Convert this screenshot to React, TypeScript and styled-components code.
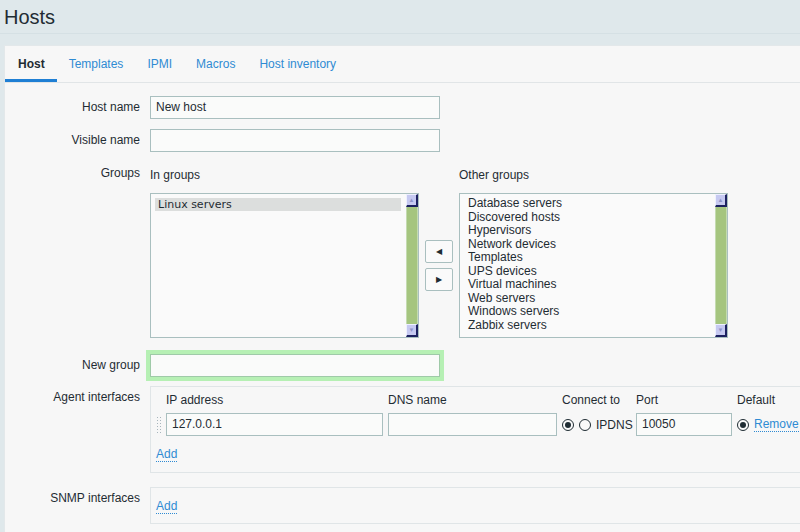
import React from "react";
import styled, { createGlobalStyle } from "styled-components";

const GlobalStyle = createGlobalStyle`
  html, body {
    margin: 0;
    padding: 0;
    background: #dfe8eb;
    overflow: hidden;
  }
  body {
    font-family: "Liberation Sans", Arial, sans-serif;
    font-size: 12px;
    color: #1f2c33;
  }
`;

const Page = styled.div`
  width: 800px;
  height: 532px;
  display: flex;
  flex-direction: column;
  overflow: hidden;
`;

const Header = styled.header`
  flex: none;
  height: 34px;
  border-bottom: 1px solid #d5e0e4;
  margin-bottom: 11px;
  padding: 5px 0 0 4px;
  box-sizing: border-box;
`;

const Title = styled.h1`
  margin: 0;
  font-size: 20px;
  font-weight: normal;
  line-height: 24px;
  color: #1f2c33;
`;

const Panel = styled.main`
  flex: 1;
  min-height: 0;
  margin-left: 4px;
  background: #f7f7f7;
  border-left: 1px solid #e3e8ea;
  border-top: 1px solid #e3e8ea;
`;

const TabBar = styled.nav`
  display: flex;
  height: 36px;
  border-bottom: 1px solid #e1e5e7;
`;

const Tab = styled.a<{ $active?: boolean }>`
  padding: 0 12px;
  line-height: 36px;
  font-size: 12px;
  color: ${(p) => (p.$active ? "#1f2c33" : "#2f8bd3")};
  font-weight: ${(p) => (p.$active ? "bold" : "normal")};
  box-shadow: ${(p) => (p.$active ? "inset 0 -3px 0 #1f7fd4" : "none")};
  cursor: pointer;

  &:first-child {
    padding-left: 13px;
  }
`;

const Form = styled.div`
  padding-top: 13px;
`;

const Row = styled.div<{ $gap?: number }>`
  display: grid;
  grid-template-columns: 135px 1fr;
  column-gap: 10px;
  margin-bottom: ${(p) => p.$gap ?? 10}px;
`;

const Label = styled.label<{ $top?: boolean }>`
  text-align: right;
  line-height: 23px;
  white-space: nowrap;
  align-self: ${(p) => (p.$top ? "start" : "stretch")};
`;

const TextInput = styled.div<{ $w: number; $glow?: boolean }>`
  width: ${(p) => p.$w}px;
  height: 23px;
  box-sizing: border-box;
  border: 1px solid ${(p) => (p.$glow ? "#9fcaa8" : "#a9bfbf")};
  background: #fafbfa;
  padding: 0 5px;
  line-height: 21px;
  font-size: 12px;
  box-shadow: ${(p) => (p.$glow ? "0 0 0 4px #b6f0b4" : "none")};
`;

const Groups = styled.div`
  display: flex;
  align-items: flex-end;
`;

const GroupCol = styled.div`
  display: flex;
  flex-direction: column;
`;

const GroupTitle = styled.div`
  height: 31px;
  line-height: 26px;
`;

const ListBox = styled.div`
  width: 269px;
  height: 145px;
  box-sizing: border-box;
  border: 1px solid #a9bfbf;
  background: #fafafa;
  display: flex;
`;

const ListItems = styled.div<{ $dejavu?: boolean }>`
  flex: 1;
  padding: ${(p) => (p.$dejavu ? "4px 5px 0 4px" : "3px 6px 0 5px")};
  font-family: ${(p) =>
    p.$dejavu ? '"DejaVu Sans", sans-serif' : '"Liberation Sans", Arial, sans-serif'};
  font-size: ${(p) => (p.$dejavu ? "11px" : "12px")};
`;

const ListItem = styled.div<{ $selected?: boolean; $h: number }>`
  line-height: ${(p) => p.$h}px;
  height: ${(p) => p.$h}px;
  padding-left: 3px;
  background: ${(p) => (p.$selected ? "#dcdedd" : "transparent")};
  white-space: nowrap;
`;

const ScrollBar = styled.div`
  width: 12px;
  display: flex;
  flex-direction: column;
`;

const ScrollArrow = styled.div`
  height: 13px;
  box-sizing: border-box;
  background: #c6c9f1;
  border-top: 1px solid #eef0ff;
  border-left: 1px solid #eef0ff;
  border-right: 2px solid #1d2160;
  border-bottom: 2px solid #1d2160;
  display: flex;
  align-items: center;
  justify-content: center;
  font-size: 6px;
  color: #8f93c9;
  line-height: 1;
`;

const ScrollTrack = styled.div`
  flex: 1;
  background: #a5c57f;
  border-left: 1px solid #c4dbb0;
  border-right: 1px solid #c4dbb0;
`;

const MoveButtons = styled.div`
  height: 145px;
  margin: 0 6px;
  display: flex;
  flex-direction: column;
  justify-content: center;
  gap: 5px;
`;

const MoveButton = styled.button`
  width: 28px;
  height: 23px;
  padding: 0;
  border: 1px solid #a9bfbf;
  border-radius: 2px;
  background: #fafafa;
  font-size: 8px;
  color: #1f2c33;
  display: flex;
  align-items: center;
  justify-content: center;
`;

const InterfaceBox = styled.div<{ $pt?: number; $pb?: number }>`
  border: 1px solid #e0e5e7;
  border-right: none;
  padding: ${(p) => p.$pt ?? 0}px 0 ${(p) => p.$pb ?? 10}px 5px;
`;

const IfaceGrid = styled.div`
  display: grid;
  grid-template-columns: 5px 217px 169px 69px 96px auto;
  column-gap: 5px;
  align-items: center;
`;

const ColHead = styled.div`
  line-height: 26px;
  white-space: nowrap;
`;

const DragHandle = styled.div`
  width: 5px;
  height: 17px;
  background-image: radial-gradient(circle, #a7b5bc 0.8px, transparent 1px);
  background-size: 3px 3px;
`;

const ConnectCell = styled.div`
  display: flex;
  align-items: center;
  gap: 5px;
`;

const Radio = styled.span<{ $checked?: boolean }>`
  width: 12px;
  height: 12px;
  box-sizing: border-box;
  border: 1px solid #1f2c33;
  border-radius: 50%;
  display: inline-flex;
  align-items: center;
  justify-content: center;
  flex: none;
  background: #fafafa;

  &::after {
    content: "";
    width: 6px;
    height: 6px;
    border-radius: 50%;
    background: ${(p) => (p.$checked ? "#1f2c33" : "transparent")};
  }
`;

const Link = styled.a`
  color: #2f8bd3;
  border-bottom: 1px dotted #2f8bd3;
  cursor: pointer;
  white-space: nowrap;
`;

const AddLine = styled.div<{ $mt?: number }>`
  margin-top: ${(p) => p.$mt ?? 0}px;
  line-height: 16px;
`;

const inGroups = ["Linux servers"];
const otherGroups = [
  "Database servers",
  "Discovered hosts",
  "Hypervisors",
  "Network devices",
  "Templates",
  "UPS devices",
  "Virtual machines",
  "Web servers",
  "Windows servers",
  "Zabbix servers",
];

const Scroll = () => (
  <ScrollBar>
    <ScrollArrow>▲</ScrollArrow>
    <ScrollTrack />
    <ScrollArrow>▼</ScrollArrow>
  </ScrollBar>
);

export default function App() {
  return (
    <Page>
      <GlobalStyle />
      <Header>
        <Title>Hosts</Title>
      </Header>
      <Panel>
        <TabBar>
          <Tab $active>Host</Tab>
          <Tab>Templates</Tab>
          <Tab>IPMI</Tab>
          <Tab>Macros</Tab>
          <Tab>Host inventory</Tab>
        </TabBar>
        <Form>
          <Row>
            <Label>Host name</Label>
            <TextInput $w={290}>New host</TextInput>
          </Row>
          <Row>
            <Label>Visible name</Label>
            <TextInput $w={290} />
          </Row>
          <Row $gap={16}>
            <Label $top>Groups</Label>
            <Groups>
              <GroupCol>
                <GroupTitle>In groups</GroupTitle>
                <ListBox>
                  <ListItems $dejavu>
                    {inGroups.map((g) => (
                      <ListItem key={g} $selected $h={13}>
                        {g}
                      </ListItem>
                    ))}
                  </ListItems>
                  <Scroll />
                </ListBox>
              </GroupCol>
              <MoveButtons>
                <MoveButton>◀</MoveButton>
                <MoveButton>▶</MoveButton>
              </MoveButtons>
              <GroupCol>
                <GroupTitle>Other groups</GroupTitle>
                <ListBox>
                  <ListItems>
                    {otherGroups.map((g) => (
                      <ListItem key={g} $h={13.5}>
                        {g}
                      </ListItem>
                    ))}
                  </ListItems>
                  <Scroll />
                </ListBox>
              </GroupCol>
            </Groups>
          </Row>
          <Row $gap={9}>
            <Label>New group</Label>
            <TextInput $w={290} $glow />
          </Row>
          <Row $gap={14}>
            <Label $top>Agent interfaces</Label>
            <InterfaceBox>
              <IfaceGrid>
                <span />
                <ColHead>IP address</ColHead>
                <ColHead>DNS name</ColHead>
                <ColHead>Connect to</ColHead>
                <ColHead>Port</ColHead>
                <ColHead>Default</ColHead>
                <DragHandle />
                <TextInput $w={217}>127.0.0.1</TextInput>
                <TextInput $w={169} />
                <ConnectCell>
                  <Radio $checked />
                  <Radio />
                  <span>IPDNS</span>
                </ConnectCell>
                <TextInput $w={96}>10050</TextInput>
                <ConnectCell>
                  <Radio $checked />
                  <Link>Remove</Link>
                </ConnectCell>
              </IfaceGrid>
              <AddLine $mt={10}>
                <Link>Add</Link>
              </AddLine>
            </InterfaceBox>
          </Row>
          <Row>
            <Label $top>SNMP interfaces</Label>
            <InterfaceBox $pt={10} $pb={9}>
              <AddLine>
                <Link>Add</Link>
              </AddLine>
            </InterfaceBox>
          </Row>
        </Form>
      </Panel>
    </Page>
  );
}
